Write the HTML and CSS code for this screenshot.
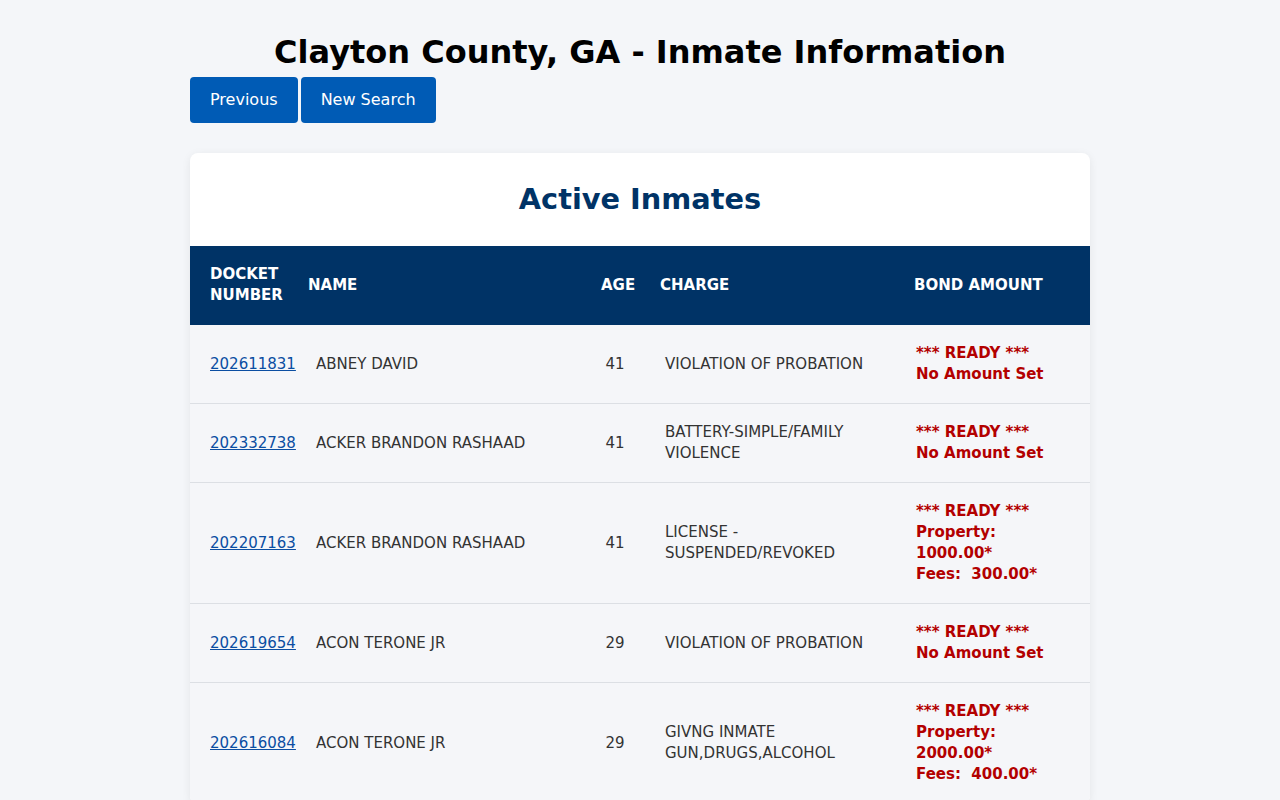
FILE: index.html
```html
<!DOCTYPE html>
<html lang="en">
<head>
<meta charset="utf-8">
<title>Clayton County, GA - Inmate Information</title>
<link rel="stylesheet" href="styles.css">
</head>
<body>
<div class="page">
  <h1 class="title">Clayton County, GA - Inmate Information</h1>
  <div class="actions">
    <a class="btn" href="#">Previous</a>
    <a class="btn" href="#">New Search</a>
  </div>
  <div class="card">
    <h2 class="card-title">Active Inmates</h2>
    <table class="inmates">
      <colgroup>
        <col class="c-docket"><col class="c-name"><col class="c-age"><col class="c-charge"><col class="c-bond">
      </colgroup>
      <thead>
        <tr>
          <th class="h-docket">DOCKET<br>NUMBER</th>
          <th class="h-name">NAME</th>
          <th class="h-age">AGE</th>
          <th class="h-charge">CHARGE</th>
          <th class="h-bond">BOND AMOUNT</th>
        </tr>
      </thead>
      <tbody>
        <tr>
          <td class="docket"><a href="#">202611831</a></td>
          <td>ABNEY DAVID</td>
          <td class="age">41</td>
          <td>VIOLATION OF PROBATION</td>
          <td class="bond">*** READY ***<br>No Amount Set</td>
        </tr>
        <tr>
          <td class="docket"><a href="#">202332738</a></td>
          <td>ACKER BRANDON RASHAAD</td>
          <td class="age">41</td>
          <td>BATTERY-SIMPLE/FAMILY<br>VIOLENCE</td>
          <td class="bond">*** READY ***<br>No Amount Set</td>
        </tr>
        <tr>
          <td class="docket"><a href="#">202207163</a></td>
          <td>ACKER BRANDON RASHAAD</td>
          <td class="age">41</td>
          <td>LICENSE -<br>SUSPENDED/REVOKED</td>
          <td class="bond">*** READY ***<br>Property:<br>1000.00*<br>Fees:  300.00*</td>
        </tr>
        <tr>
          <td class="docket"><a href="#">202619654</a></td>
          <td>ACON TERONE JR</td>
          <td class="age">29</td>
          <td>VIOLATION OF PROBATION</td>
          <td class="bond">*** READY ***<br>No Amount Set</td>
        </tr>
        <tr>
          <td class="docket"><a href="#">202616084</a></td>
          <td>ACON TERONE JR</td>
          <td class="age">29</td>
          <td>GIVNG INMATE<br>GUN,DRUGS,ALCOHOL</td>
          <td class="bond">*** READY ***<br>Property:<br>2000.00*<br>Fees:  400.00*</td>
        </tr>
      </tbody>
    </table>
  </div>
</div>
</body>
</html>
```

FILE: styles.css
```css
html, body {
  margin: 0;
  padding: 0;
}
body {
  background: #f4f6f9;
  font-family: "DejaVu Sans", Verdana, sans-serif;
  color: #333333;
}
.page {
  width: 900px;
  margin: 0 auto;
  padding-top: 33px;
}
.title {
  margin: 0;
  text-align: center;
  font-size: 32px;
  line-height: 38px;
  font-weight: bold;
  color: #000000;
}
.actions {
  display: flex;
  gap: 3px;
  margin-top: 6px;
}
.btn {
  display: block;
  background: #005bb5;
  color: #ffffff;
  text-decoration: none;
  font-size: 16px;
  line-height: 20px;
  padding: 13px 20px;
  border-radius: 4px;
}
.card {
  margin-top: 30px;
  background: #ffffff;
  border-radius: 8px;
  box-shadow: 0 2px 10px rgba(0, 0, 0, 0.07);
  overflow: hidden;
}
.card-title {
  margin: 0;
  text-align: center;
  font-size: 28.8px;
  line-height: 34px;
  font-weight: bold;
  color: #003366;
  padding: 29px 0 30px;
}
.inmates {
  width: 100%;
  border-collapse: collapse;
  table-layout: fixed;
  font-size: 15px;
  line-height: 21px;
}
.c-docket { width: 116px; }
.c-name { width: 269px; }
.c-age { width: 80px; }
.c-charge { width: 251px; }
.c-bond { width: 184px; }
.inmates thead tr {
  background: #003366;
}
.inmates th {
  color: #ffffff;
  font-weight: bold;
  text-align: left;
  padding: 18px 0 19px;
  vertical-align: middle;
}
.inmates th.h-docket { padding-left: 20px; }
.inmates th.h-name { padding-left: 2px; }
.inmates th.h-age { padding-left: 26px; }
.inmates th.h-charge { padding-left: 5px; }
.inmates th.h-bond { padding-left: 8px; }
.inmates tbody tr {
  background: #f5f6f9;
  border-bottom: 1px solid #dcdfe4;
}
.inmates td {
  padding: 18px 10px;
  vertical-align: middle;
  color: #333333;
}
.inmates td.docket {
  padding-left: 20px;
}
.inmates td.docket a {
  color: #0b4ea2;
  text-decoration: underline;
}
.inmates td.age {
  text-align: center;
}
.inmates td.bond {
  color: #b30000;
  font-weight: bold;
  white-space: pre-wrap;
}
```
